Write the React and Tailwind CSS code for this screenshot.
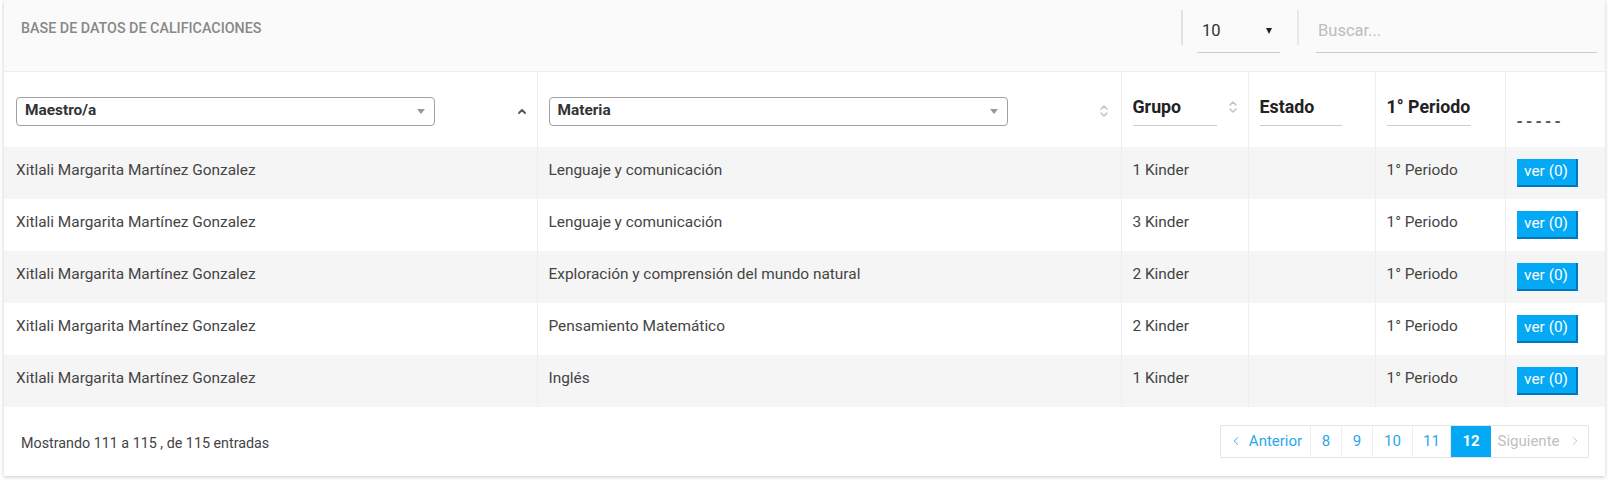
import { ChevronLeft, ChevronRight } from "lucide-react";

const rows = [
  { teacher: "Xitlali Margarita Martínez Gonzalez", subject: "Lenguaje y comunicación", group: "1 Kinder", period: "1° Periodo" },
  { teacher: "Xitlali Margarita Martínez Gonzalez", subject: "Lenguaje y comunicación", group: "3 Kinder", period: "1° Periodo" },
  { teacher: "Xitlali Margarita Martínez Gonzalez", subject: "Exploración y comprensión del mundo natural", group: "2 Kinder", period: "1° Periodo" },
  { teacher: "Xitlali Margarita Martínez Gonzalez", subject: "Pensamiento Matemático", group: "2 Kinder", period: "1° Periodo" },
  { teacher: "Xitlali Margarita Martínez Gonzalez", subject: "Inglés", group: "1 Kinder", period: "1° Periodo" },
];

const pages = [
  { label: "8", w: "w-[31px]" },
  { label: "9", w: "w-[31px]" },
  { label: "10", w: "w-[40px]" },
  { label: "11", w: "w-[38px]" },
];

function SortBoth() {
  return (
    <svg width="10" height="14" viewBox="0 0 10 14" fill="none" stroke="#c4c4c4" strokeWidth="1.6" strokeLinecap="round" strokeLinejoin="round">
      <path d="M2 5 L5 2 L8 5" />
      <path d="M2 9 L5 12 L8 9" />
    </svg>
  );
}

function SortUp() {
  return (
    <svg width="10" height="8" viewBox="0 0 10 8" fill="none" stroke="#555" strokeWidth="1.8" strokeLinecap="round" strokeLinejoin="round">
      <path d="M2 6 L5 3 L8 6" />
    </svg>
  );
}

function FakeSelect({ label, width }) {
  return (
    <div className={`${width} flex h-[29px] items-center justify-between rounded-[4px] border border-[#a0a0a0] bg-white pl-[8px] pr-[9px]`}>
      <span className="text-[15.4px] font-bold text-[#333]">{label}</span>
      <span className="h-0 w-0 border-x-[4px] border-t-[5px] border-x-transparent border-t-[#999]" />
    </div>
  );
}

function HeaderLabel({ children, width }) {
  return (
    <div className={`${width} h-[29px] border-b border-[#ccc] text-[17.8px] leading-[20px] font-bold text-[#222]`}>
      {children}
    </div>
  );
}

export default function App() {
  return (
    <div className="min-h-[480px] bg-white font-['Roboto',sans-serif]">
      <div className="ml-[4px] h-[476px] w-[1601px] bg-white shadow-[0_1px_4px_rgba(0,0,0,0.22)]">
        <div className="flex h-[72px] items-start border-b border-[#eee] bg-[#fafafa]">
          <div className="flex-1 pl-[17px] pt-[20px] text-[14.3px] leading-[16px] font-medium text-[#888]">
            BASE DE DATOS DE CALIFICACIONES
          </div>
          <div className="mr-[8px] mt-[10px] flex items-start">
            <div className="h-[35px] w-[2px] bg-[#e2e2e2]" />
            <div className="ml-[14px] flex h-[43px] w-[83px] items-center justify-between border-b border-[#ccc] pl-[5px] pr-[8px]">
              <span className="text-[16.5px] text-[#333]">10</span>
              <span className="h-0 w-0 border-x-[3.5px] border-t-[6px] border-x-transparent border-t-[#222]" />
            </div>
            <div className="ml-[17px] h-[35px] w-[2px] bg-[#e8e8e8]" />
            <div className="ml-[17px] flex h-[43px] w-[281px] items-center border-b border-[#ccc] pl-[2px]">
              <span className="text-[16.5px] text-[#bdbdbd]">Buscar...</span>
            </div>
          </div>
        </div>

        <table className="w-full table-fixed border-collapse">
          <colgroup>
            <col className="w-[533px]" />
            <col className="w-[584px]" />
            <col className="w-[127px]" />
            <col className="w-[127px]" />
            <col className="w-[130px]" />
            <col className="w-[100px]" />
          </colgroup>
          <thead>
            <tr className="h-[75px]">
              <th className="border-r border-[#eee] pl-[12px] pr-[10px] pt-[3px] align-middle">
                <div className="flex items-center">
                  <FakeSelect label="Maestro/a" width="w-[419px]" />
                  <div className="ml-auto flex">
                    <SortUp />
                  </div>
                </div>
              </th>
              <th className="border-r border-[#eee] px-[11px] pt-[3px] align-middle">
                <div className="flex items-center">
                  <FakeSelect label="Materia" width="w-[459px]" />
                  <div className="ml-auto mr-[1px] flex">
                    <SortBoth />
                  </div>
                </div>
              </th>
              <th className="border-r border-[#eee] pl-[11px] pr-[10px] pt-[3px] text-left align-middle">
                <div className="flex items-start">
                  <HeaderLabel width="w-[84px]">Grupo</HeaderLabel>
                  <div className="ml-auto mt-[3px] flex">
                    <SortBoth />
                  </div>
                </div>
              </th>
              <th className="border-r border-[#eee] px-[11px] pt-[3px] text-left align-middle">
                <HeaderLabel width="w-[82px]">Estado</HeaderLabel>
              </th>
              <th className="border-r border-[#eee] px-[11px] pt-[3px] text-left align-middle">
                <HeaderLabel width="w-[84px]">1° Periodo</HeaderLabel>
              </th>
              <th className="px-[11px] pt-[3px] text-left align-middle">
                <div className="h-[29px] pt-[18px] text-[16px] leading-[14px] font-bold tracking-[3.2px] text-[#555]">-----</div>
              </th>
            </tr>
          </thead>
          <tbody>
            {rows.map((row, index) => (
              <tr key={index} className={`h-[52px] ${index % 2 === 0 ? "bg-[#f5f5f5]" : "bg-white"}`}>
                <td className="border-r border-[#eee] px-[12px] pt-[13px] align-top text-[15.4px] leading-[20px] text-[#444]">{row.teacher}</td>
                <td className="border-r border-[#eee] px-[11px] pt-[13px] align-top text-[15.4px] leading-[20px] text-[#444]">{row.subject}</td>
                <td className="border-r border-[#eee] px-[11px] pt-[13px] align-top text-[15.4px] leading-[20px] text-[#444]">{row.group}</td>
                <td className="border-r border-[#eee] px-[11px] pt-[13px] align-top" />
                <td className="border-r border-[#eee] px-[11px] pt-[13px] align-top text-[15.4px] leading-[20px] text-[#444]">{row.period}</td>
                <td className="px-[11px] pt-[12px] align-top">
                  <button type="button" className="flex h-[28px] w-[61px] items-center justify-center border-b-2 border-r-2 border-[#0277bd] bg-[#03a9f4] text-[15.4px] text-white">
                    ver (0)
                  </button>
                </td>
              </tr>
            ))}
          </tbody>
        </table>

        <div className="flex h-[68px] items-center justify-between pl-[17px] pr-[16px]">
          <span className="mt-[6px] text-[14.3px] text-[#444]">Mostrando 111 a 115 , de 115 entradas</span>
          <div className="flex h-[33px] overflow-hidden rounded-[2px] border border-[#e3e3e3] text-[15px]">
            <div className="flex w-[90px] items-center justify-center gap-[6px] border-r border-[#eee] text-[#2ba6ef]">
              <ChevronLeft size={14} strokeWidth={1.6} />
              <span>Anterior</span>
            </div>
            {pages.map((page) => (
              <div key={page.label} className={`flex ${page.w} items-center justify-center border-r border-[#eee] text-[#2ba6ef]`}>
                {page.label}
              </div>
            ))}
            <div className="flex w-[40px] items-center justify-center bg-[#03a9f4] font-bold text-white">12</div>
            <div className="flex w-[97px] items-center justify-center gap-[8px] text-[#c0c0c0]">
              <span>Siguiente</span>
              <ChevronRight size={14} strokeWidth={1.6} />
            </div>
          </div>
        </div>
      </div>
    </div>
  );
}
